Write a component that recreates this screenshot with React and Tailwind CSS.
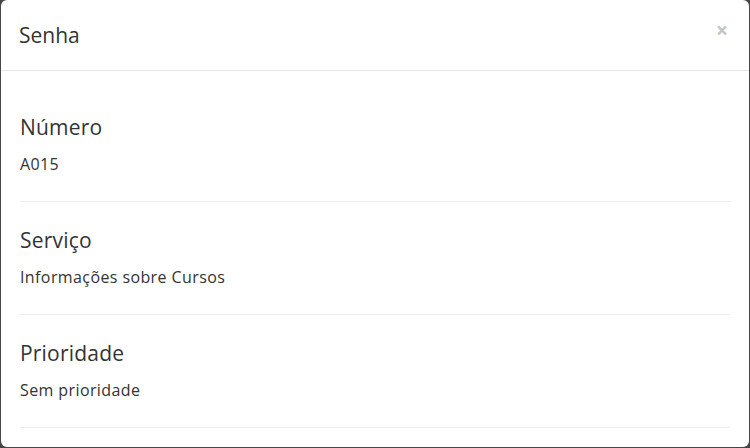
export default function App() {
    const campos = [
        { titulo: 'Número', valor: 'A015' },
        { titulo: 'Serviço', valor: 'Informações sobre Cursos' },
        { titulo: 'Prioridade', valor: 'Sem prioridade' },
    ];

    return (
        <div className="h-[448px] w-[750px] bg-[#464646] px-px pb-px" style={{ fontFamily: '"Open Sans", "Noto Sans", sans-serif' }}>
            <div className="flex h-full flex-col rounded-b-md rounded-t-md bg-white text-[#333]">
                {/* cabeçalho */}
                <div className="flex h-[71px] items-center justify-between border-b border-[#e5e5e5] pl-[18px] pr-[21px]">
                    <h4 className="text-[21px] leading-[26px]">Senha</h4>
                    <button type="button" className="mb-[10px] text-[21px] font-bold leading-none text-[#c4c4c4]">
                        ×
                    </button>
                </div>

                {/* corpo */}
                <div className="px-[19px] pt-[41px]">
                    {campos.map((c, i) => (
                        <div key={c.titulo} className={`border-b border-[#eee] pb-[27px] ${i > 0 ? 'mt-[23px]' : ''}`}>
                            <h3 className="text-[21px] leading-[30px] tracking-[0.2px]">{c.titulo}</h3>
                            <p className="mt-[12px] text-[16px] leading-5 tracking-[0.4px]">{c.valor}</p>
                        </div>
                    ))}
                </div>
            </div>
        </div>
    );
}
